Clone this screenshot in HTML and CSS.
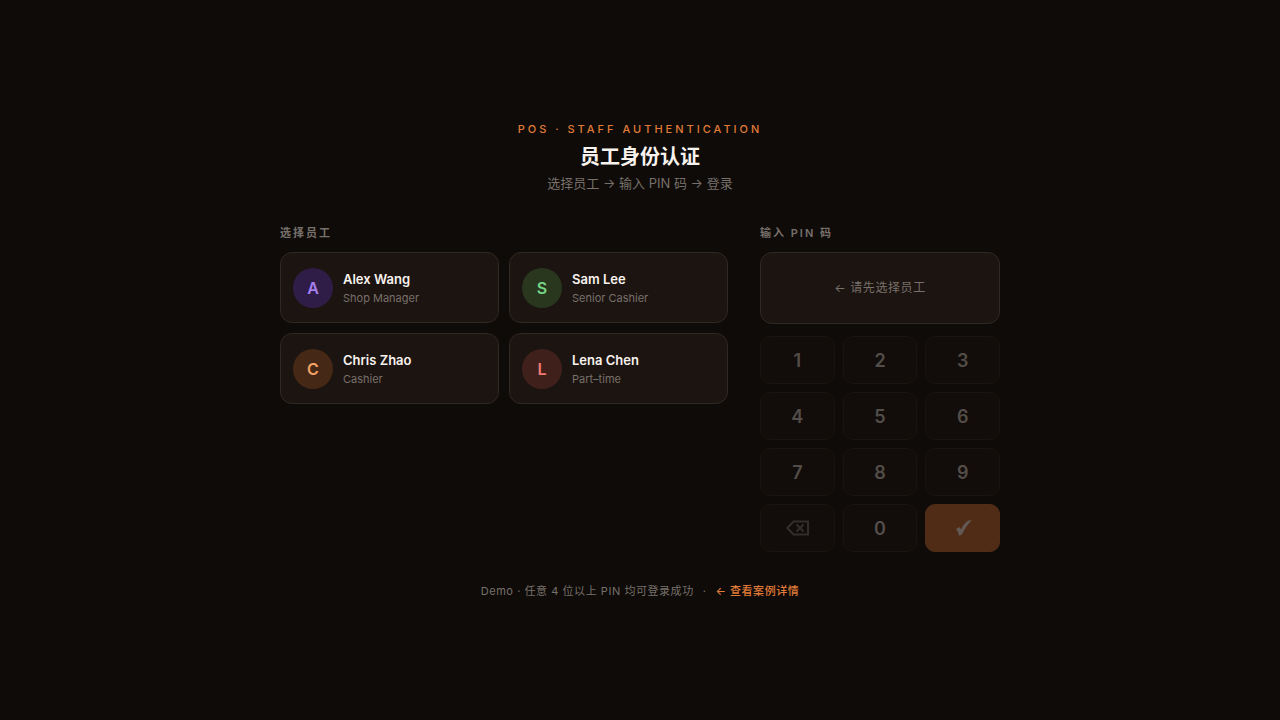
FILE: index.html
```html
<!DOCTYPE html>
<html lang="zh-CN">
<head>
<meta charset="utf-8">
<meta name="viewport" content="width=device-width, initial-scale=1">
<title>员工身份认证</title>
<link rel="stylesheet" href="styles.css">
</head>
<body>
<main class="page">
  <header class="header">
    <p class="eyebrow">POS · STAFF AUTHENTICATION</p>
    <h1 class="title">员工身份认证</h1>
    <p class="subtitle">选择员工 → 输入 PIN 码 → 登录</p>
  </header>
  <div class="columns">
    <section class="staff">
      <h2 class="label">选择员工</h2>
      <div class="staff-grid">
        <button class="card" type="button">
          <span class="avatar violet">A</span>
          <span class="who"><span class="name">Alex Wang</span><span class="role">Shop Manager</span></span>
        </button>
        <button class="card" type="button">
          <span class="avatar green">S</span>
          <span class="who"><span class="name">Sam Lee</span><span class="role">Senior Cashier</span></span>
        </button>
        <button class="card" type="button">
          <span class="avatar orange">C</span>
          <span class="who"><span class="name">Chris Zhao</span><span class="role">Cashier</span></span>
        </button>
        <button class="card" type="button">
          <span class="avatar red">L</span>
          <span class="who"><span class="name">Lena Chen</span><span class="role">Part–time</span></span>
        </button>
      </div>
    </section>
    <section class="pin">
      <h2 class="label">输入 PIN 码</h2>
      <div class="display">← 请先选择员工</div>
      <div class="keypad">
        <button class="key" type="button" disabled>1</button>
        <button class="key" type="button" disabled>2</button>
        <button class="key" type="button" disabled>3</button>
        <button class="key" type="button" disabled>4</button>
        <button class="key" type="button" disabled>5</button>
        <button class="key" type="button" disabled>6</button>
        <button class="key" type="button" disabled>7</button>
        <button class="key" type="button" disabled>8</button>
        <button class="key" type="button" disabled>9</button>
        <button class="key erase" type="button" aria-label="删除" disabled>
          <svg width="24" height="16" viewBox="0 0 24 16" fill="none" stroke="currentColor" stroke-width="2"><path d="M8.500 1.500H23V14.500H8.500L2.300 8Z"/><path d="M11.500 4.500l7 7M18.500 4.500l-7 7"/></svg>
        </button>
        <button class="key" type="button" disabled>0</button>
        <button class="key confirm" type="button" aria-label="确认" disabled>
          <svg width="18" height="16" viewBox="0 0 18 16" fill="currentColor"><path d="M2 9L5.500 7C6.200 7.700 6.600 8.500 7 9.500C9 5 11.500 2 14.500 .400L17.800 .200C13.800 4 10.500 8.800 8 14.500L5 15.700C4.500 13 3.600 10.800 2 9Z"/></svg>
        </button>
      </div>
    </section>
  </div>
  <footer class="footer">
    <span>Demo · 任意 4 位以上 PIN 均可登录成功</span>
    <span>·</span>
    <a class="back" href="#">← 查看案例详情</a>
  </footer>
</main>
</body>
</html>
```
FILE: styles.css
```css
* {
  box-sizing: border-box;
}

body {
  margin: 0;
  background: #0e0b08;
  color: #f8f2ee;
  font-family: Inter, "Noto Sans CJK SC", sans-serif;
}

button {
  font: inherit;
  color: inherit;
}

.page {
  min-height: 100vh;
  padding: 24px;
  display: flex;
  flex-direction: column;
  align-items: center;
  justify-content: center;
}

.header {
  text-align: center;
  margin-bottom: 32px;
}

.eyebrow {
  margin: 0 0 8px;
  color: #e07b39;
  font-size: 11px;
  line-height: 16px;
  font-weight: 500;
  letter-spacing: 3px;
}

.title {
  margin: 0 0 4px;
  font-size: 20px;
  line-height: 24px;
  font-weight: 700;
}

.subtitle {
  margin: 0;
  color: #78706b;
  font-size: 13px;
  line-height: 20px;
}

.columns {
  width: 100%;
  max-width: 720px;
  display: grid;
  grid-template-columns: 1fr 240px;
  gap: 32px;
}

.label {
  margin: 0 0 11px;
  color: #78706b;
  font-size: 11px;
  line-height: 16px;
  font-weight: 600;
  letter-spacing: 2px;
}

.staff-grid {
  display: grid;
  grid-template-columns: 1fr 1fr;
  gap: 10px;
}

.card {
  display: flex;
  align-items: center;
  gap: 10px;
  padding: 14px 12px;
  min-height: 71px;
  border: 1px solid #302822;
  border-radius: 12px;
  background: #1c1410;
  text-align: left;
}

.avatar {
  flex: none;
  width: 40px;
  height: 40px;
  border-radius: 50%;
  display: grid;
  place-items: center;
  font-size: 16px;
  font-weight: 600;
}

.violet {
  background: #301d47;
  color: #a67fee;
}

.green {
  background: #28371e;
  color: #77d588;
}

.orange {
  background: #452815;
  color: #f2a268;
}

.red {
  background: #40201b;
  color: #ee7b76;
}

.who {
  display: flex;
  flex-direction: column;
  gap: 2px;
}

.name {
  font-size: 13px;
  line-height: 18px;
  font-weight: 600;
}

.role {
  color: #78706b;
  font-size: 11px;
  line-height: 16px;
}

.display {
  min-height: 72px;
  margin-bottom: 12px;
  display: grid;
  place-items: center;
  border: 1px solid #302822;
  border-radius: 12px;
  background: #1c1410;
  color: #78706b;
  font-size: 12px;
  line-height: 16px;
  letter-spacing: 0.05em;
}

.keypad {
  display: grid;
  grid-template-columns: repeat(3, 1fr);
  gap: 8px;
}

.key {
  height: 48px;
  padding: 0;
  display: grid;
  place-items: center;
  border: 1px solid #19140f;
  border-radius: 10px;
  background: #120d0a;
  color: #524d49;
  font-size: 18px;
  font-weight: 600;
}

.erase {
  color: #332e2b;
}

.confirm {
  border-color: #502c16;
  background: #502c16;
  color: #625954;
}

.footer {
  margin-top: 31px;
  display: flex;
  gap: 9px;
  color: #78706b;
  font-size: 11px;
  line-height: 16px;
  letter-spacing: 0.05em;
}

.back {
  color: #e07b39;
  font-weight: 500;
  text-decoration: none;
}
```
